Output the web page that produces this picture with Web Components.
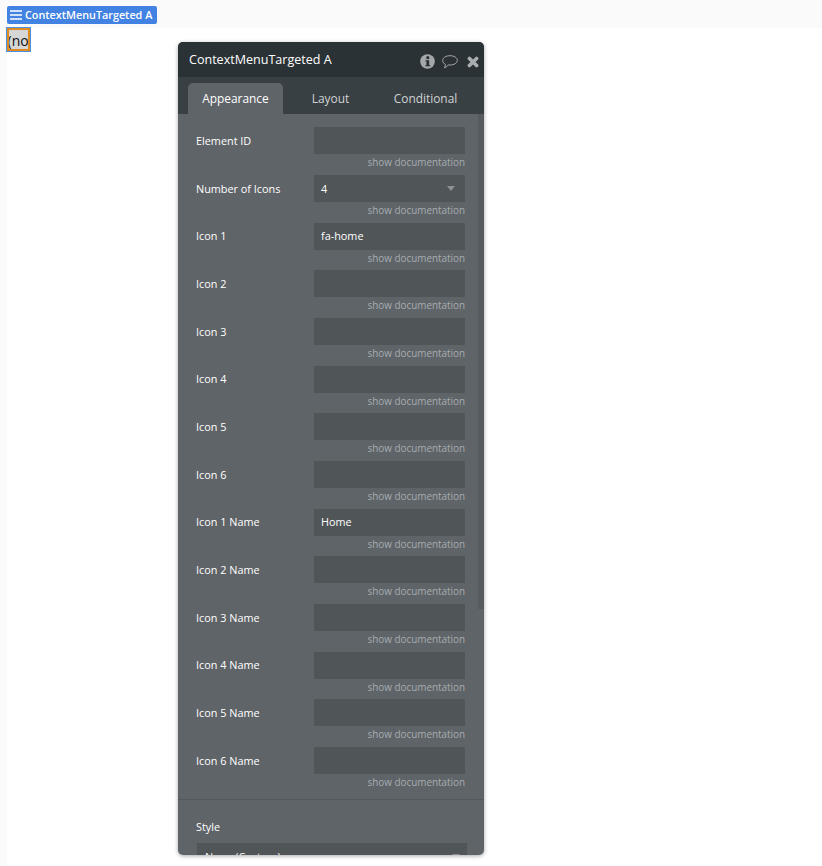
<!DOCTYPE html>
<html><head><meta charset="utf-8"><style>
html,body{margin:0;padding:0;height:866px;overflow:hidden;background:#fff;font-family:"Open Sans",sans-serif}
</style></head><body>
<template id="t-app"><style>
:host{display:block;position:relative;width:822px;height:866px;background:#fafafa;overflow:hidden}
.top{height:28px;display:flex;align-items:flex-start;padding:6px 0 0 7px;box-sizing:border-box}
.canvas{position:absolute;left:7px;right:0;top:28px;bottom:0;background:#fff}
</style><div class="top"><slot name="badge"></slot></div><div class="canvas"><slot name="canvas"></slot></div><slot></slot></template>

<template id="t-badge"><style>
:host{display:inline-flex;align-items:center;height:18px;background:#4282e2;border-radius:2px;color:#fff;font:600 10.8px/18px "Open Sans",sans-serif;padding:0 5px 0 3px;gap:3px;position:relative;z-index:1}
svg{display:block}
</style><svg width="12" height="10" viewBox="0 0 12 10"><path d="M0 1h12M0 5h12M0 9h12" stroke="#fff" stroke-width="1.4"/></svg><slot></slot></template>

<template id="t-el"><style>
:host{display:block;width:23px;height:23px;box-sizing:border-box;border:2px solid #e08a22;outline:1px solid #4a90e2;background:#d6d6d6;color:#111;font:14px/22px "Open Sans",sans-serif;overflow:hidden;white-space:nowrap;text-indent:-1.5px}
</style><slot></slot></template>

<template id="t-panel"><style>
:host{display:flex;flex-direction:column;position:absolute;left:178px;top:42px;width:306px;height:813px;border-radius:5px;overflow:hidden;background:#5f6468;box-shadow:0 1px 4px rgba(0,0,0,.35);color:#fff}
.head{height:35px;flex:none;background:#2b3235;display:flex;align-items:center;padding:0 5px 0 11px}
.title{flex:1;font:400 12.55px/35px "Open Sans",sans-serif;margin-top:-1px}
.icons{display:flex;align-items:center;margin-top:3px}
.tabs{height:37px;flex:none;background:#394044;display:flex;align-items:flex-end;padding-left:10px;box-sizing:border-box}
.body{flex:1;position:relative;overflow:hidden}
.bar{position:absolute;right:0;top:0;width:6px;height:495px;background:#565b5f}
.content{padding:13.3px 19px 0 18px}
svg{display:block}
.i2{margin:1px 9px 0 7px}
.i3{margin-top:1px}
</style><div class="head"><div class="title"><slot name="title"></slot></div><div class="icons">
<svg width="15" height="15" viewBox="0 0 15 15"><circle cx="7.5" cy="7.5" r="7.3" fill="#a4a8aa"/><circle cx="7.8" cy="3.7" r="1.6" fill="#2b3235"/><path d="M5.400 6.200h3.800v4.700h1v1.400H5.400v-1.400h1V7.600h-1z" fill="#2b3235"/></svg>
<svg class="i2" width="16" height="14" viewBox="0 0 16 14"><path d="M8 .7c4 0 7.300 2 7.300 4.700S12 10 8 10c-.6 0-1.200 0-1.700-.1C5.400 11.200 4 12.300 2.300 12.800c.7-.9 1.100-2 1.200-3.300C1.800 8.700.7 7.200.7 5.400.7 2.700 4 .7 8 .7z" fill="none" stroke="#a4a8aa" stroke-width="1"/></svg>
<svg class="i3" width="12" height="12" viewBox="0 0 12 12"><path d="M2.400 2.400 9.600 9.600M9.600 2.400 2.400 9.600" stroke="#a9adaf" stroke-width="3.600" stroke-linecap="round"/></svg>
</div></div>
<div class="tabs"><slot name="tabs"></slot></div>
<div class="body"><div class="bar"></div><div class="content"><slot></slot></div></div></template>

<template id="t-tab"><style>
:host{display:block;height:31px;box-sizing:border-box;font:400 11.9px/31px "Open Sans",sans-serif;text-align:center;color:#d0d2d3;border-radius:5px 5px 0 0}
:host([active]){background:#5f6468;color:#fff}
</style><slot></slot></template>

<template id="t-row"><style>
:host{display:block;height:47.67px;position:relative}
.line{display:flex;align-items:center;height:27px}
.label{width:118px;flex:none;font:400 10.85px/27px "Open Sans",sans-serif;color:#fff;padding-bottom:.5px}
.box{width:151px;height:27px;flex:none;background:#505558;font:400 10.85px/27px "Open Sans",sans-serif;color:#fff;padding:0 7px;box-sizing:border-box;display:flex;justify-content:space-between;align-items:center}
.val{padding-bottom:.5px}
.doc{text-align:right;font:400 9.9px/14px "Open Sans",sans-serif;color:#a6acb0;margin-top:1.2px;width:269px}
.arrow{width:0;height:0;border-left:4.5px solid transparent;border-right:4.5px solid transparent;border-top:5px solid #8d9194;display:none;margin-right:3px}
:host([select]) .arrow{display:block}
</style><div class="line"><div class="label"><slot name="label"></slot></div><div class="box"><span class="val"><slot></slot></span><i class="arrow"></i></div></div><div class="doc">show documentation</div></template>

<template id="t-style"><style>
:host{display:block;margin:5px -19px 0 -18px;border-top:1px solid #54595c;padding:19px 18px 0 18px}
.l{font:400 10.85px/16px "Open Sans",sans-serif;color:#fff}
.box{margin-top:8px;width:270px;height:27px;margin-left:1px;background:#505558;font:400 10.85px/27px "Open Sans",sans-serif;padding:0 8px;box-sizing:border-box;display:flex;justify-content:space-between;align-items:center;white-space:nowrap}
.arrow{width:0;height:0;border-left:4.5px solid transparent;border-right:4.5px solid transparent;border-top:5px solid #8d9194;margin-right:-1px}
</style><div class="l"><slot name="label"></slot></div><div class="box"><span><slot></slot></span><i class="arrow"></i></div></template>

<x-app>
<x-badge slot="badge">ContextMenuTargeted A</x-badge>
<x-el slot="canvas">(no</x-el>
<x-panel>
<span slot="title">ContextMenuTargeted A</span>
<x-tab slot="tabs" active style="width:95px">Appearance</x-tab>
<x-tab slot="tabs" style="width:95px">Layout</x-tab>
<x-tab slot="tabs" style="width:95px">Conditional</x-tab>
<x-row><span slot="label">Element ID</span></x-row>
<x-row select><span slot="label">Number of Icons</span>4</x-row>
<x-row><span slot="label">Icon 1</span>fa-home</x-row>
<x-row><span slot="label">Icon 2</span></x-row>
<x-row><span slot="label">Icon 3</span></x-row>
<x-row><span slot="label">Icon 4</span></x-row>
<x-row><span slot="label">Icon 5</span></x-row>
<x-row><span slot="label">Icon 6</span></x-row>
<x-row><span slot="label">Icon 1 Name</span>Home</x-row>
<x-row><span slot="label">Icon 2 Name</span></x-row>
<x-row><span slot="label">Icon 3 Name</span></x-row>
<x-row><span slot="label">Icon 4 Name</span></x-row>
<x-row><span slot="label">Icon 5 Name</span></x-row>
<x-row><span slot="label">Icon 6 Name</span></x-row>
<x-style><span slot="label">Style</span>None (Custom)</x-style>
</x-panel>
</x-app>
<script>
for (const [name,id] of [['x-app','t-app'],['x-badge','t-badge'],['x-el','t-el'],['x-panel','t-panel'],['x-tab','t-tab'],['x-row','t-row'],['x-style','t-style']]) {
  customElements.define(name, class extends HTMLElement {
    constructor(){super();this.attachShadow({mode:'open'}).appendChild(document.getElementById(id).content.cloneNode(true));}
  });
}
</script>
</body></html>
